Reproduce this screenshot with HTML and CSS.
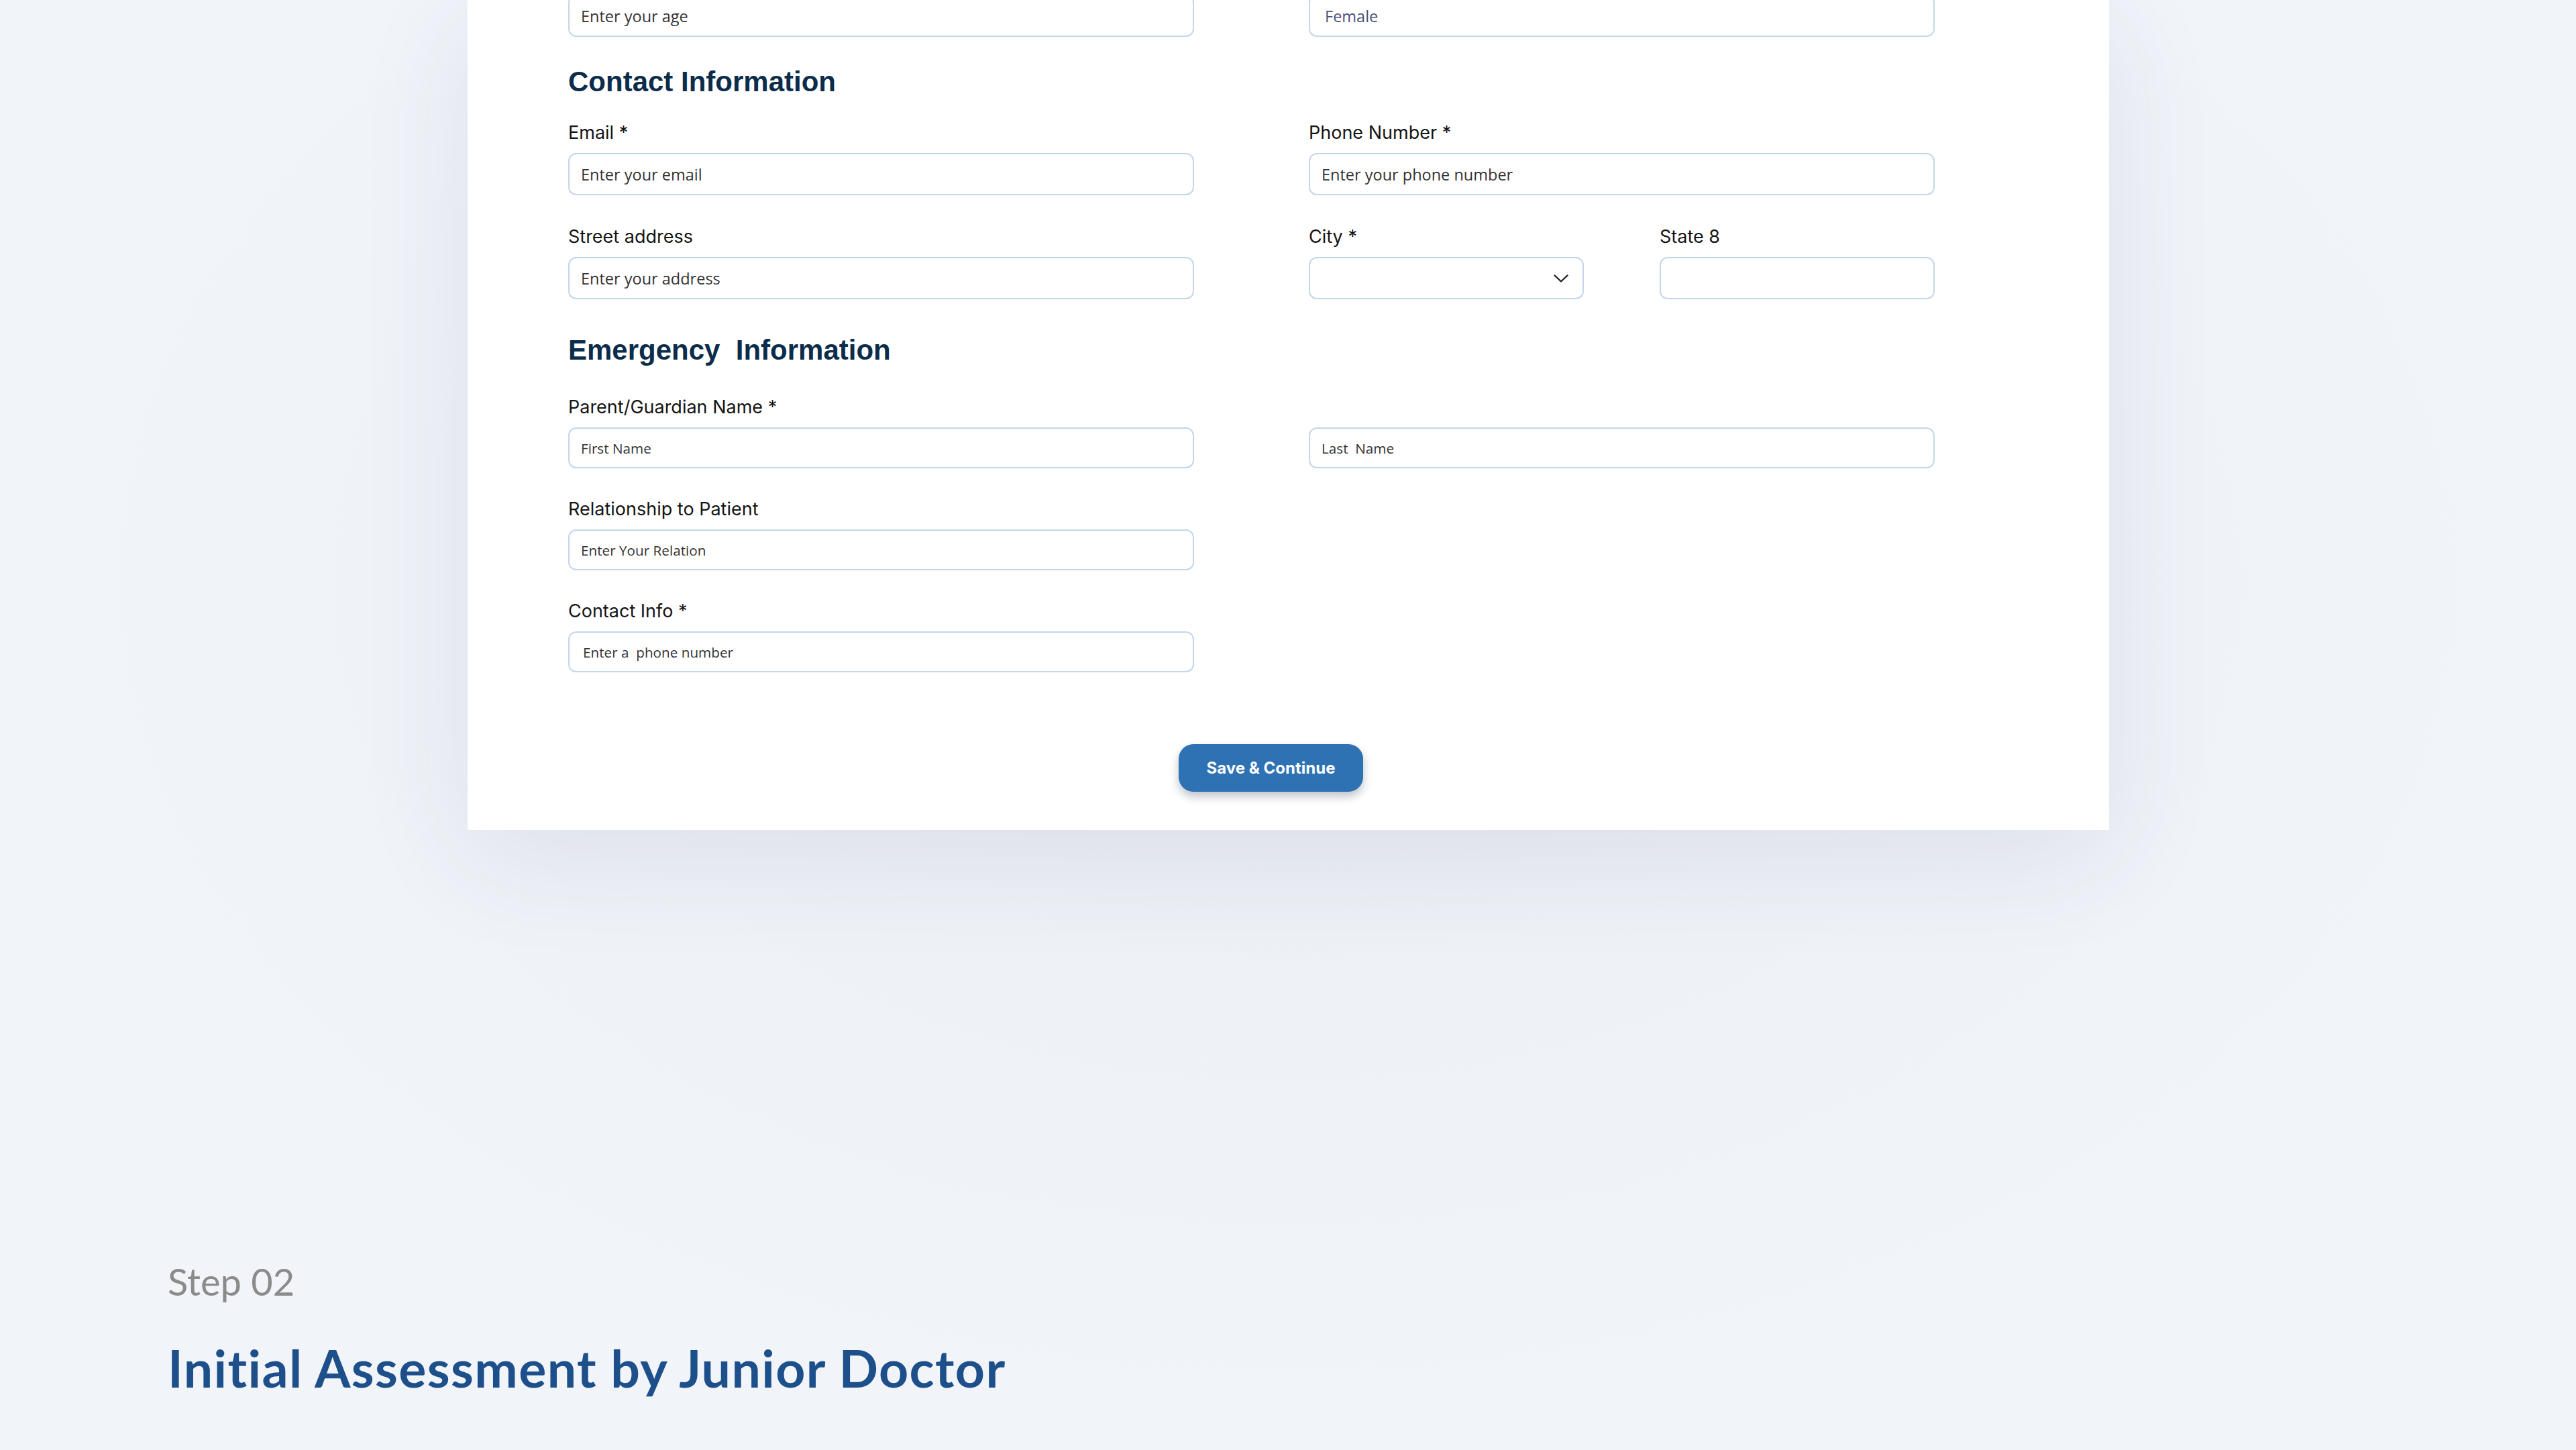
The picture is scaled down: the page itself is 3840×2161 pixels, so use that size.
FILE: index.html
```html
<!DOCTYPE html>
<html lang="en">
<head>
<meta charset="utf-8">
<title>Initial Assessment by Junior Doctor</title>
<link rel="stylesheet" href="styles.css">
</head>
<body>
<div class="page">
  <section class="card">
    <div class="grid top-row">
      <div class="input"><span class="ph">Enter your age</span></div>
      <div class="input"><span class="ph value">Female</span></div>
    </div>

    <h2 class="section-title contact-title">Contact Information</h2>
    <div class="grid contact-grid">
      <div class="field">
        <div class="label">Email *</div>
        <div class="input"><span class="ph">Enter your email</span></div>
      </div>
      <div class="field">
        <div class="label">Phone Number *</div>
        <div class="input"><span class="ph">Enter your phone number</span></div>
      </div>
      <div class="field">
        <div class="label">Street address</div>
        <div class="input"><span class="ph">Enter your address</span></div>
      </div>
      <div class="split">
        <div class="field">
          <div class="label">City *</div>
          <div class="input select">
            <svg class="chevron" width="22" height="12" viewBox="0 0 22 12"><path d="M1.5 1.5 L11 10.5 L20.5 1.5" fill="none" stroke="#1f1f1f" stroke-width="2.4" stroke-linecap="round" stroke-linejoin="round"/></svg>
          </div>
        </div>
        <div class="field">
          <div class="label">State 8</div>
          <div class="input"></div>
        </div>
      </div>
    </div>

    <h2 class="section-title emergency-title">Emergency  Information</h2>
    <div class="grid emergency-grid">
      <div class="field">
        <div class="label">Parent/Guardian Name *</div>
        <div class="input small"><span class="ph sm">First Name</span></div>
      </div>
      <div class="field end">
        <div class="input small"><span class="ph sm">Last  Name</span></div>
      </div>
      <div class="field">
        <div class="label">Relationship to Patient</div>
        <div class="input small"><span class="ph sm">Enter Your Relation</span></div>
      </div>
      <div></div>
      <div class="field">
        <div class="label">Contact Info *</div>
        <div class="input small"><span class="ph sm indent">Enter a  phone number</span></div>
      </div>
    </div>

    <div class="actions">
      <button class="btn" type="button">Save &amp; Continue</button>
    </div>
  </section>

  <div class="caption">
    <div class="step">Step 02</div>
    <h1 class="title">Initial Assessment by Junior Doctor</h1>
  </div>
</div>
</body>
</html>
```

FILE: styles.css
```css
* { box-sizing: border-box; }

html, body {
  margin: 0;
  padding: 0;
}

body {
  background: #f1f4f9;
  font-family: "Inter", "Liberation Sans", sans-serif;
  width: 3840px;
  height: 2161px;
  overflow: hidden;
}

.page {
  width: 3840px;
  height: 2161px;
  overflow: hidden;
  background: radial-gradient(ellipse at 50% 40%, #eaedf2 0%, #eef1f6 35%, #f1f4f9 70%);
}

.card {
  width: 2447px;
  margin-left: 697px;
  margin-top: -8px;
  background: #ffffff;
  padding: 0 260px 57px 150px;
  box-shadow: 0 40px 160px rgba(40, 60, 100, 0.09);
}

.grid {
  display: grid;
  grid-template-columns: 933px 933px;
  column-gap: 171px;
}

.contact-grid {
  margin-top: 38px;
  row-gap: 45px;
}

.emergency-grid {
  margin-top: 47px;
  row-gap: 44px;
}

.split {
  display: grid;
  grid-template-columns: 410px 410px;
  column-gap: 113px;
}

.field {
  display: flex;
  flex-direction: column;
}

.field.end {
  justify-content: flex-end;
}

.label {
  font-family: "Inter", sans-serif;
  font-size: 27px;
  line-height: 33px;
  color: #141414;
  margin-bottom: 14px;
  white-space: pre;
}

.input {
  height: 63px;
  border: 2px solid #c3d6ec;
  border-radius: 12px;
  background: #ffffff;
  display: flex;
  align-items: center;
  padding: 0 17px;
}

.input.small {
  height: 61px;
}

.input.select {
  justify-content: flex-end;
  padding-right: 21px;
}

.chevron {
  display: block;
}

.ph {
  font-family: "Open Sans", "Noto Sans", sans-serif;
  font-size: 23.5px;
  color: #333333;
  white-space: pre;
}

.ph.sm {
  font-size: 20.7px;
}

.ph.indent {
  padding-left: 3px;
}

.ph.value {
  color: #4b5079;
  padding-left: 5px;
}

.section-title {
  font-family: "Liberation Sans", Arial, sans-serif;
  font-weight: 700;
  font-size: 42px;
  line-height: 42px;
  color: #0b2c4a;
  margin: 0;
  white-space: pre;
}

.contact-title {
  margin-top: 46px;
}

.emergency-title {
  margin-top: 55px;
}

.actions {
  margin-top: 107px;
  display: flex;
  padding-left: 910px;
}

.btn {
  width: 275px;
  height: 71px;
  border: none;
  border-radius: 22px;
  background: #2e72b3;
  color: #ffffff;
  font-family: "Inter", sans-serif;
  font-weight: 700;
  font-size: 24px;
  box-shadow: 0 7px 14px rgba(20, 40, 70, 0.28);
  padding: 0;
}

.caption {
  margin-left: 250px;
  margin-top: 645px;
}

.step {
  font-family: "Lato", sans-serif;
  font-size: 56px;
  line-height: 56px;
  color: #8b8b8b;
}

.title {
  margin: 62px 0 0 0;
  font-family: "Lato", sans-serif;
  font-weight: 700;
  font-size: 77px;
  line-height: 77px;
  letter-spacing: 1.4px;
  color: #1d4f8b;
}
```
